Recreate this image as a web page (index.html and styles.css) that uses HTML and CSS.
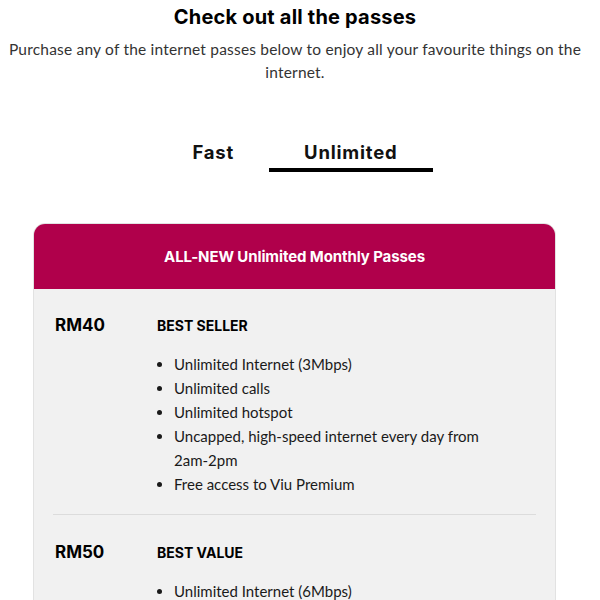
FILE: index.html
```html
<!DOCTYPE html>
<html>
<head>
<meta charset="utf-8">
<link rel="stylesheet" href="styles.css">
</head>
<body>
<section class="passes">
  <h1 class="title">Check out all the passes</h1>
  <p class="subtitle">Purchase any of the internet passes below to enjoy all your favourite things on the internet.</p>
  <div class="tabs">
    <div class="tab">Fast</div>
    <div class="tab active">Unlimited</div>
  </div>
  <div class="card">
    <div class="card-head">ALL-NEW Unlimited Monthly Passes</div>
    <div class="card-body">
      <div class="plan">
        <div class="price">RM40</div>
        <div class="details">
          <div class="label">BEST SELLER</div>
          <ul class="features">
            <li>Unlimited Internet (3Mbps)</li>
            <li>Unlimited calls</li>
            <li>Unlimited hotspot</li>
            <li>Uncapped, high-speed internet every day from 2am-2pm</li>
            <li>Free access to Viu Premium</li>
          </ul>
        </div>
      </div>
      <div class="plan">
        <div class="price">RM50</div>
        <div class="details">
          <div class="label">BEST VALUE</div>
          <ul class="features">
            <li>Unlimited Internet (6Mbps)</li>
            <li>Unlimited calls</li>
            <li>Unlimited hotspot</li>
          </ul>
        </div>
      </div>
    </div>
  </div>
</section>
</body>
</html>
```
FILE: styles.css
```css
* { box-sizing: border-box; }
html, body { margin: 0; padding: 0; background: #fff; }
body {
  font-family: "Lato", "Open Sans", "Liberation Sans", sans-serif;
  color: #111;
}
.passes { width: 590px; padding: 0 0 40px; }
.title {
  margin: 0;
  padding-top: 5px;
  text-align: center;
  font-family: "Inter", "Lato", sans-serif;
  font-size: 20px;
  font-weight: 700;
  line-height: 24px;
  color: #000;
  letter-spacing: 0.2px;
}
.subtitle {
  margin: 9px auto 0;
  width: 584px;
  text-align: center;
  font-size: 15.5px;
  line-height: 23px;
  color: #333;
  letter-spacing: 0.2px;
}
.tabs {
  display: flex;
  justify-content: center;
  margin-top: 57px;
}
.tab {
  padding: 0 35px;
  font-family: "Inter", "Lato", sans-serif;
  font-size: 18.5px;
  font-weight: 700;
  line-height: 22px;
  height: 31px;
  color: #111;
  letter-spacing: 0.8px;
}
.tab.active { border-bottom: 4px solid #000; }
.card {
  width: 523px;
  margin: 51px 0 0 33px;
  border: 1px solid #e2e2e2;
  border-radius: 12px 12px 0 0;
  background: #f1f1f1;
  overflow: hidden;
}
.card-head {
  background: #b0004b;
  color: #fff;
  height: 65px;
  display: flex;
  align-items: center;
  justify-content: center;
  font-family: "Inter", "Lato", sans-serif;
  font-size: 15px;
  font-weight: 700;
  letter-spacing: -0.1px;
}
.card-body { padding: 0 19px; }
.plan {
  display: flex;
  padding: 25px 0 18px;
  border-bottom: 1px solid #dcdcdc;
}
.plan:first-child { padding-top: 24px; }
.price {
  width: 104px;
  padding-left: 2px;
  font-family: "Inter", "Lato", sans-serif;
  font-size: 17px;
  font-weight: 700;
  line-height: 24px;
  color: #000;
}
.details { flex: 1; }
.label {
  font-family: "Inter", "Lato", sans-serif;
  font-size: 14px;
  font-weight: 700;
  line-height: 26px;
  color: #000;
}
.features {
  margin: 13px 0 0;
  padding: 0 0 0 17px;
  font-size: 15px;
  line-height: 24px;
  color: #1a1a1a;
  width: 340px;
}
```
